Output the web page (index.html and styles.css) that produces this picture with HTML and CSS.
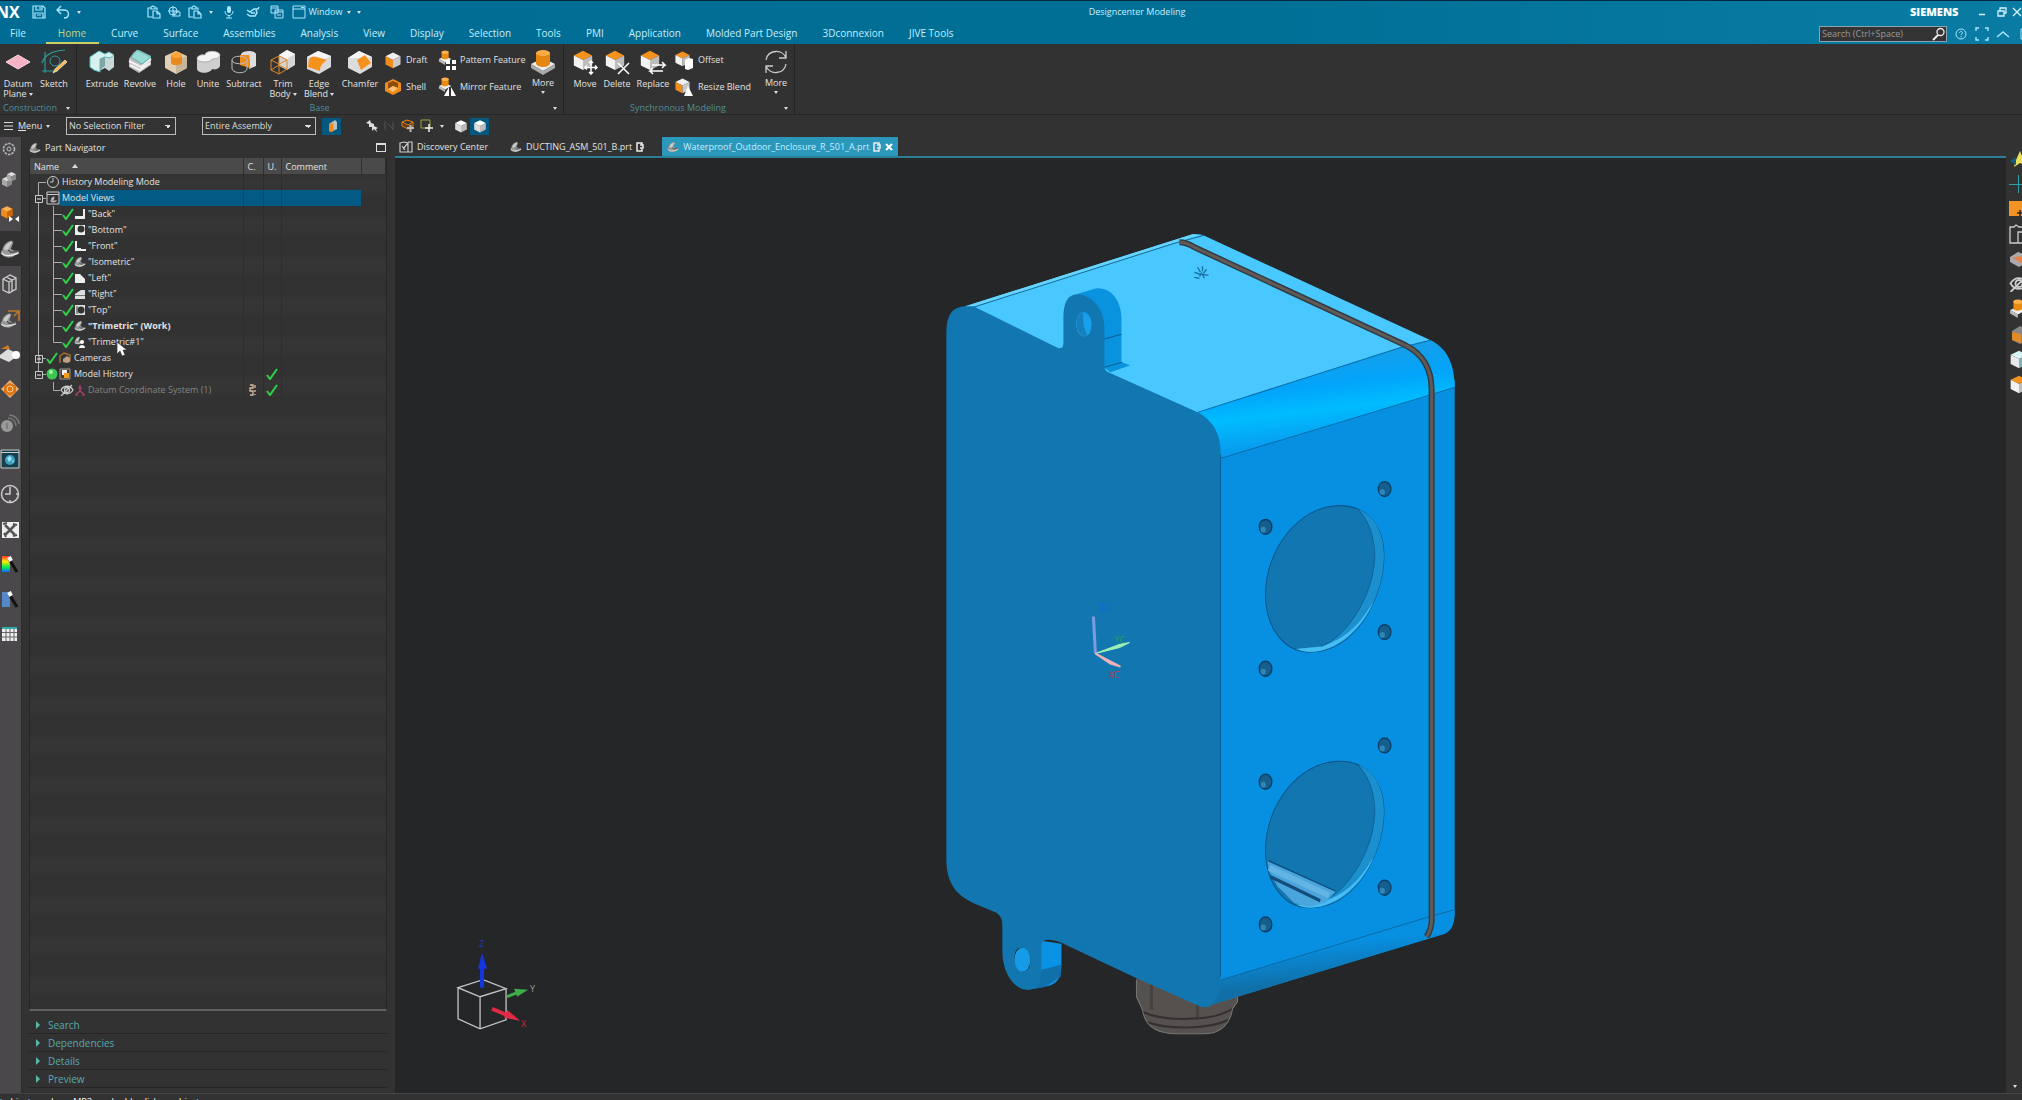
FILE: index.html
```html
<!DOCTYPE html>
<html lang="en">
<head>
<meta charset="utf-8">
<title>Designcenter Modeling</title>
<link rel="stylesheet" href="styles.css">
</head>
<body>
<svg class="sprite" aria-hidden="true">
  <symbol id="cube" viewBox="0 0 24 24"><path class="f-top" d="M12 2l10 5-10 5L2 7z"/><path class="f-left" d="M2 7l10 5v11L2 18z"/><path class="f-right" d="M22 7l-10 5v11l10-5z"/></symbol>
  <symbol id="part" viewBox="0 0 24 24"><path d="M3 13C3 8 9 2 14 2l2 2-3 8 4 2 5 0 1 3-9 5c-5 1-12-2-13-5 0-2 1-3 2-4z" fill="#999"/><path d="M5 13C5 8 10 4 14 3c1 3-3 5-4 10z" fill="#ccc"/><path d="M10 13l3 3 8-1" fill="none" stroke="#444" stroke-width="1.500"/><path d="M2 17c4 4 10 4 20 0" fill="none" stroke="#eee" stroke-width="1.500"/></symbol>
  <symbol id="check" viewBox="0 0 12 12"><path d="M1 7l3 4 7-10" fill="none" stroke="#2fd24c" stroke-width="2"/></symbol>
  <symbol id="paste" viewBox="0 0 14 14"><path d="M5 12H1V3h3m4 0h2v2M4 4V2l2-1 2 1v2zM6 6h4l3 3v4H6zM10 6v3h3" fill="none" stroke="#a9e6ff" stroke-width="1.2"/></symbol>
  <symbol id="out" viewBox="0 0 8 10"><path d="M6 3V1H1v8h5V7M4 3h3v3H4" fill="none" stroke="#eee" stroke-width="1.500"/></symbol>
  <symbol id="feature" viewBox="0 0 18 18"><path d="M1 10l7-3 7 3-7 4z" fill="#eee"/><path d="M1 10l7 4v3l-7-4z" fill="#bbb"/><path d="M4 2v7c1 2 6 2 8 0V2z" fill="#e98a15"/><ellipse cx="8" cy="2.500" rx="4" ry="2" fill="#ffb04a"/></symbol>
  <symbol id="g0first" viewBox="0 0 16 16"><path d="M8.500 16V8.500H16" stroke="#aaa" fill="none"/></symbol>
  <symbol id="gminus" viewBox="0 0 16 16"><path d="M8.500 0v16M8 8.500h8" stroke="#aaa"/><path d="M5.500 5.500h7v7h-7z" fill="#333" stroke="#ccc"/><path d="M7 9h4" stroke="#eee"/></symbol>
  <symbol id="gplus" viewBox="0 0 16 16"><path d="M8.500 0v16M8 8.500h8" stroke="#aaa"/><path d="M5.500 5.500h7v7h-7zM9 6v6" fill="#333" stroke="#ccc"/><path d="M7 9h4" stroke="#eee"/></symbol>
  <symbol id="gend" viewBox="0 0 16 16"><path d="M8.500 0v8.500H16" stroke="#aaa" fill="none"/><path d="M5.500 5.500h7v7h-7z" fill="#333" stroke="#ccc"/><path d="M7 9h4" stroke="#eee"/></symbol>
  <symbol id="g1" viewBox="0 0 32 16"><path d="M8.500 0v16M23.500 0v16M23 8.500h9" stroke="#aaa"/></symbol>
  <symbol id="g1last" viewBox="0 0 32 16"><path d="M8.500 0v16M23.500 0v8.500H32" stroke="#aaa" fill="none"/></symbol>
  <symbol id="gleaf" viewBox="0 0 32 16"><path d="M23.500 0v8.500H32" stroke="#aaa" fill="none"/></symbol>
  <symbol id="eyeoff" viewBox="0 0 14 12"><path d="M1 6c3-5 9-5 12 0-3 5-9 5-12 0zM1 12L12 1" fill="none" stroke="#ccc" stroke-width="1.3"/><circle cx="7" cy="6" r="2.500" fill="none" stroke="#ccc" stroke-width="1.300"/></symbol>
  <linearGradient id="bevel" x1=".4" y1=".1" x2=".6" y2=".9"><stop offset="0" stop-color="#1a9de6"/><stop offset=".35" stop-color="#02a4fa"/><stop offset=".6" stop-color="#00bcff"/><stop offset="1" stop-color="#0a93ea"/></linearGradient>
  <linearGradient id="base" x1=".4" y1=".1" x2=".6" y2=".9"><stop offset=".3" stop-color="#0790e2"/><stop offset=".8" stop-color="#116ea6"/></linearGradient>
  <linearGradient id="hue" x1="0" y1="0" x2="0" y2="1"><stop stop-color="#f33"/><stop offset=".35" stop-color="#fe0"/><stop offset=".7" stop-color="#0e5"/><stop offset="1" stop-color="#16f"/></linearGradient>
</svg>

<header class="titlebar">
  <div class="title-row">
    <div class="quick">
      <span class="brand">NX</span>
      <button class="qb w26" aria-label="Save"><svg width="14" height="14" viewBox="0 0 14 14"><path d="M1 1h10l2 2v10H1zM4 1v4h6V1M8 2v2M3 13V8h8v5M5 10h4" fill="none" stroke="#a9e6ff" stroke-width="1.2"/></svg></button>
      <button class="qb w22" aria-label="Undo"><svg width="14" height="14" viewBox="0 0 14 14"><path d="M5 1L1 5l4 4M1 5h7c6 0 6 8 0 8" fill="none" stroke="#a9e6ff" stroke-width="1.4"/></svg></button>
      <button class="qb caret w10" aria-label="Undo list"></button>
      <button class="qb first-paste" aria-label="Paste"><svg width="14" height="14"><use href="#paste"/></svg></button>
      <button class="qb w20" aria-label="Target"><svg width="14" height="14" viewBox="0 0 14 14"><path d="M6 1v11M1 6h11M7 7h6v4H7z" fill="none" stroke="#a9e6ff"/><circle cx="6" cy="6" r="4" fill="none" stroke="#a9e6ff"/></svg></button>
      <button class="qb w22" aria-label="Paste special"><svg width="14" height="14"><use href="#paste"/></svg></button>
      <button class="qb caret w10" aria-label="Paste list"></button>
      <button class="qb w26" aria-label="Dictate"><svg width="12" height="14" viewBox="0 0 12 14"><rect x="4" y="1" width="4" height="7" rx="2" fill="#a9e6ff"/><path d="M2 6c0 6 8 6 8 0M6 10v3M3 13h6" fill="none" stroke="#a9e6ff"/></svg></button>
      <button class="qb w22" aria-label="Touch"><svg width="14" height="12" viewBox="0 0 14 12"><path d="M1 4l3 2 4-3h4l1-2M1 8l3 2h5l2-3-1-3M5 7h4" fill="none" stroke="#a9e6ff" stroke-width="1.500"/></svg></button>
      <button class="qb w26" aria-label="Cascade"><svg width="14" height="14" viewBox="0 0 14 14"><path d="M1 1h7v7H1zM5 5h8v8H5zM5 7h8M1 3h7M7 10h4" fill="#0b6b93" stroke="#a9e6ff"/></svg></button>
      <button class="qb window-btn"><svg width="14" height="14" viewBox="0 0 14 14"><path d="M1 1h12v12H1zM1 4h12M9 2.500h3" fill="none" stroke="#a9e6ff"/></svg>Window</button>
      <button class="qb caret w10" aria-label="Window list"></button>
      <button class="qb caret w10" aria-label="Customize"></button>
    </div>
    <h1 class="app-title">Designcenter Modeling</h1>
    <div class="win">
      <span class="siemens">SIEMENS</span>
      <button class="qb w20" aria-label="Minimize"><svg width="8" height="8"><path d="M1 6.500h6" stroke="#d5f3ff" stroke-width="1.5"/></svg></button>
      <button class="qb w20" aria-label="Restore"><svg width="10" height="10" viewBox="0 0 10 10"><path d="M1 4h6v5H1zM3 4V1h6v5H7" fill="none" stroke="#d5f3ff" stroke-width="1.3"/></svg></button>
      <button class="qb w16" aria-label="Close"><svg width="10" height="10"><path d="M1 1l8 8M9 1L1 9" stroke="#d5f3ff" stroke-width="1.300"/></svg></button>
    </div>
  </div>
  <div class="tab-row">
    <nav class="menu-tabs">
      <a href="#" class="file">File</a><a href="#" class="on">Home</a><a href="#">Curve</a><a href="#">Surface</a><a href="#">Assemblies</a><a href="#">Analysis</a><a href="#">View</a><a href="#">Display</a><a href="#">Selection</a><a href="#">Tools</a><a href="#">PMI</a><a href="#">Application</a><a href="#">Molded Part Design</a><a href="#">3Dconnexion</a><a href="#">JIVE Tools</a>
    </nav>
    <div class="find">
      <label class="search"><input type="text" aria-label="Search" placeholder="Search (Ctrl+Space)"><svg width="14" height="14" viewBox="0 0 14 14"><circle cx="8.500" cy="5" r="3.500" fill="none" stroke="#eee" stroke-width="1.3"/><path d="M6 8l-5 5" stroke="#eee" stroke-width="2"/></svg></label>
      <button class="qb w20" aria-label="Help"><svg width="12" height="12" viewBox="0 0 12 12"><circle cx="6" cy="6" r="5" fill="none" stroke="#a9e6ff"/><path d="M4.500 5c0-2 3-2 3 0 0 1-1.500 1-1.500 2M6 8v1.200" fill="none" stroke="#a9e6ff"/></svg></button>
      <button class="qb w22" aria-label="Full screen"><svg width="14" height="14" viewBox="0 0 14 14"><path d="M1 4V1h3m6 0h3v3m0 6v3h-3m-6 0H1v-3" fill="none" stroke="#a9e6ff" stroke-width="1.400"/></svg></button>
      <button class="qb w20" aria-label="Collapse ribbon"><svg width="14" height="8"><path d="M1 7l6-5 6 5" fill="none" stroke="#a9e6ff" stroke-width="1.500"/></svg></button>
      <button class="qb w16" aria-label="Options"><svg width="12" height="12"><path d="M6 1h6v10H6z" fill="none" stroke="#a9e6ff"/></svg></button>
    </div>
  </div>
</header>

<section class="ribbon" aria-label="Home">
  <div class="group construction">
    <div class="tools">
      <button class="tool"><svg width="26" height="26" viewBox="0 0 26 26"><path d="M13 6l12 7-12 7-12-7z" fill="#f6b3c6" stroke="#ffd6e2"/></svg><span>Datum<br>Plane<i class="dd"></i></span></button>
      <button class="tool"><svg width="26" height="26" viewBox="0 0 26 26"><path d="M4 24V3M1 22h16M1 14C4 5 12 2 24 1" fill="none" stroke="#2f9c9a" stroke-width="1.200"/><circle cx="14" cy="12" r="5" fill="none" stroke="#2f9c9a"/><path d="M24 11l2 2-10 9-4 2 2-4z" fill="#f5bd4b" stroke="#fff" stroke-width=".6"/></svg><span>Sketch</span></button>
    </div>
    <div class="caption"><span>Construction</span><button class="dd-btn" aria-label="Construction options"></button></div>
  </div>
  <div class="group base">
    <div class="tools">
      <button class="tool"><svg width="26" height="26" viewBox="0 0 26 26"><path d="M1 8l9-6 6 3 4-2 5 3v12l-5 4-4-3-6 3-9-5z" fill="#c9d8d8"/><path d="M1 8l9-6 6 3 4-2 5 3-4 3-5-1-5 2v13l-6-2-4-3z" fill="#d7f1f1" stroke="#5bb9b9"/><path d="M11 10l5-2v9l-5 4z" fill="#7fa5a7"/></svg><span>Extrude</span></button>
      <button class="tool"><svg width="26" height="26" viewBox="0 0 26 26"><path d="M2 10l5-7 5-2 12 6v9L12 24 2 18z" fill="#bcbcbc"/><path d="M4 8l6-7 14 7-9 7z" fill="#9adbd6" stroke="#56b8b0"/><path d="M2 12l12 6 10-8M3 16l10 5 10-7" fill="none" stroke="#f2f2f2" stroke-width="2"/></svg><span>Revolve</span></button>
      <button class="tool"><svg width="26" height="26" viewBox="0 0 26 26"><path d="M2 7l11-5 11 5v12l-11 6-11-6z" fill="#e3cdb4"/><path d="M13 12l11-5v12l-11 6z" fill="#c9b49c"/><path d="M8 6v8c1 3 9 3 11 0V6z" fill="#e98a1f"/><ellipse cx="13.500" cy="6" rx="5.500" ry="3" fill="#ffa63c"/></svg><span>Hole</span></button>
      <button class="tool"><svg width="26" height="26" viewBox="0 0 26 26"><path d="M2 10c0-3 4-5 8-4 0-5 14-5 15 0v11c-1 3-5 4-8 3-2 5-14 5-15 0z" fill="#cfcfcf"/><path d="M2 10c0-3 4-5 8-4 0-5 14-5 15 0 0 3-4 4-8 4-1 4-14 4-15 0z" fill="#f4f4f4" stroke="#999" stroke-width=".7"/></svg><span>Unite</span></button>
      <button class="tool"><svg width="26" height="26" viewBox="0 0 26 26"><path d="M10 5c2-4 14-4 15 0v12l-7 3V10c-3 0-8 0-8-5z" fill="#ddd"/><path d="M9 6h9l1 5v8l-10-3z" fill="#f08c1c"/><path d="M1 11v9c2 5 14 5 15 0v-9M1 11c0-5 14-5 15 0s-15 5-15 0z" fill="none" stroke="#bbb"/></svg><span>Subtract</span></button>
      <button class="tool"><svg width="26" height="26" viewBox="0 0 26 26"><path d="M9 6l8-5 8 4v11l-8 5-8-4z" fill="#d5d5d5"/><path d="M9 6l8-5 8 4-8 5z" fill="#f5f5f5"/><path d="M1 11l8-4 8 4v9l-8 5-8-4zM1 11l8 4 8-4M9 15v10M9 7v9l-8 5M9 16l8 4" fill="none" stroke="#e08a28"/></svg><span>Trim<br>Body<i class="dd"></i></span></button>
      <button class="tool"><svg width="26" height="26" viewBox="0 0 26 26"><path d="M1 8l11-6 13 5v11l-12 7-12-5z" fill="#d9d9d9"/><path d="M1 8l11-6 13 5-6 3z" fill="#f5f5f5"/><path d="M3 10c3-3 5-3 8-2l10 3c-4 3-7 5-7 11L2 18z" fill="#f5921e"/></svg><span>Edge<br>Blend<i class="dd"></i></span></button>
      <button class="tool"><svg width="26" height="26" viewBox="0 0 26 26"><path d="M1 9l11-7 13 6v10l-12 7-12-6z" fill="#dcdcdc"/><path d="M1 9l11-7 13 6-11 1z" fill="#f6f6f6"/><path d="M10 11l8-5 6 8-10 7z" fill="#f5921e"/></svg><span>Chamfer</span></button>
      <div class="stack">
        <button class="mini"><svg class="c-side" width="18" height="18"><use href="#cube"/></svg>Draft</button>
        <button class="mini"><svg width="18" height="18" viewBox="0 0 18 18"><path d="M1 5l8-4 8 4v8l-8 4-8-4z" fill="#ef8c1c"/><path d="M4 5l5-2 5 2v5l-5-2-5 3z" fill="#8f4b08"/><path d="M4 11l5-3 5 2-5 4z" fill="#ffc078"/></svg>Shell</button>
      </div>
      <div class="stack">
        <button class="mini"><svg width="18" height="20" viewBox="0 0 18 20"><use href="#feature" width="16" height="16"/><path d="M8 10h4v4H8zM14 10h4v4h-4zM8 16h4v4H8zM14 16h4v4h-4z" fill="#fff"/></svg>Pattern Feature</button>
        <button class="mini"><svg width="18" height="20" viewBox="0 0 18 20"><use href="#feature" width="16" height="16"/><path d="M11 10v9H6zM13 10v9h5z" fill="#fff"/></svg>Mirror Feature</button>
      </div>
      <button class="tool more"><svg width="26" height="26" viewBox="0 0 26 26"><path d="M1 15l12-6 12 6-12 7z" fill="#eee"/><path d="M1 15l12 7v4L1 19zM25 15l-12 7v4l12-7z" fill="#aaa"/><path d="M6 4v11c2 4 12 4 14 0V4z" fill="#e58512"/><ellipse cx="13" cy="4" rx="7" ry="3" fill="#ffae45"/></svg><span>More<i class="dd below"></i></span></button>
    </div>
    <div class="caption center"><span>Base</span><button class="dd-btn" aria-label="Base options"></button></div>
  </div>
  <div class="group sync">
    <div class="tools">
      <button class="tool"><svg class="c-topo" width="26" height="26" viewBox="0 0 26 26"><use href="#cube" width="22" height="22"/><path d="M19 12v13M12.500 18.500h13M17 14l2-2 2 2M17 23l2 2 2-2M15 16.500l-2 2 2 2M23 16.500l2 2-2 2" fill="none" stroke="#fff" stroke-width="1.500"/></svg><span>Move</span></button>
      <button class="tool"><svg class="c-topo" width="26" height="26" viewBox="0 0 26 26"><use href="#cube" width="22" height="22"/><path d="M14 14l11 11M25 14L14 25" stroke="#fff" stroke-width="1.500"/></svg><span>Delete</span></button>
      <button class="tool"><svg class="c-topo" width="28" height="26" viewBox="0 0 28 26"><use href="#cube" width="22" height="22"/><path d="M13 16h13l-3-3m3 3l-3 3M24 22H11l3-3m-3 3l3 3" fill="none" stroke="#fff" stroke-width="1.500"/></svg><span>Replace</span></button>
      <div class="stack">
        <button class="mini"><svg class="c-topo" width="20" height="20" viewBox="0 0 20 20"><use href="#cube" width="17" height="17"/><path d="M11 10l4-2 4 1v9l-5 2-3-1z" fill="#fff"/></svg>Offset</button>
        <button class="mini"><svg class="c-side" width="20" height="20" viewBox="0 0 20 20"><use href="#cube" width="17" height="17"/><path d="M14 9l5 10h-9z" fill="#fff"/></svg>Resize Blend</button>
      </div>
      <button class="tool more"><svg width="26" height="26" viewBox="0 0 26 26"><path d="M3 11C5 0 20 0 23 9M23 2v7h-7M23 15c-2 11-17 11-20 2M3 24v-7h7" fill="none" stroke="#ccc" stroke-width="1.300"/></svg><span>More<i class="dd below"></i></span></button>
    </div>
    <div class="caption center"><span>Synchronous Modeling</span><button class="dd-btn" aria-label="Synchronous Modeling options"></button></div>
  </div>
</section>

<section class="selbar" aria-label="Selection">
  <button class="menu-btn"><svg width="10" height="10"><path d="M0 1.500h9M0 5h9M0 8.500h9" stroke="#ddd"/></svg><span><u>M</u>enu</span><i class="dd"></i></button>
  <select class="type-filter" aria-label="Type filter"><option>No Selection Filter</option></select>
  <select class="scope" aria-label="Selection scope"><option>Entire Assembly</option></select>
  <button class="sb lit first-lit" aria-label="Face rule"><svg width="12" height="14" viewBox="0 0 12 14"><path d="M3 5l6-4 2 2v7l-6 3z" fill="#b9c4ca"/><path d="M3 5l4-1 1 8-4 1-1-1z" fill="#f08c1c"/></svg></button>
  <button class="sb w40 right" aria-label="Select"><svg width="14" height="14" viewBox="0 0 14 14"><path d="M1 4l4-3 1 3 3 1v2l4 2-2 1 1 3-3-3-2 2V8L4 8V5z" fill="#ddd"/></svg></button>
  <button class="sb dim" aria-label="Deselect"><svg width="12" height="12"><path d="M2 1v9M4 3l6 6M10 2v8" stroke="#555" fill="none"/></svg></button>
  <button class="sb" aria-label="Highlight"><svg width="14" height="14" viewBox="0 0 14 14"><path d="M1 3l5-2 6 2v4l-5 3-6-3zM1 3l6 3 5-3" fill="#5a3a18" stroke="#d88227"/><path d="M6 9h7M9.500 6v7" stroke="#bbb" stroke-width="2"/></svg></button>
  <button class="sb" aria-label="Rectangle select"><svg width="14" height="14" viewBox="0 0 14 14"><path d="M1 1h9v8H1z" fill="none" stroke="#a2a23a"/><path d="M9 5v8M5 9h8" stroke="#eee" stroke-width="1.500"/></svg></button>
  <i class="dd"></i>
  <button class="sb shade" aria-label="Shaded"><svg class="c-white" width="14" height="14"><use href="#cube"/></svg></button>
  <button class="sb lit" aria-label="Shaded with edges"><svg class="c-white" width="14" height="14"><use href="#cube"/></svg></button>
</section>

<main class="work">
  <nav class="rail" aria-label="Resource bar">
    <button class="gear" aria-label="Settings"><svg width="14" height="14" viewBox="0 0 14 14"><circle cx="7" cy="7" r="5.500" fill="none" stroke="#bbb" stroke-width="1.500" stroke-dasharray="2.500 1"/><circle cx="7" cy="7" r="2" fill="none" stroke="#bbb"/></svg></button>
    <button aria-label="Assembly Navigator"><svg class="c-grey" width="20" height="20" viewBox="0 0 20 20"><use href="#cube" x="1" y="6" width="12" height="13"/><use href="#cube" x="6" y="1" width="11" height="13"/></svg></button>
    <button aria-label="Constraint Navigator"><svg class="c-orange" width="20" height="20" viewBox="0 0 20 20"><use href="#cube" width="14" height="16"/><path d="M9 12l4 3-4 3zM19 12l-4 3 4 3z" fill="#fff"/></svg></button>
    <button class="on" aria-label="Part Navigator"><svg width="20" height="20"><use href="#part"/></svg></button>
    <button aria-label="Reuse Library"><svg width="20" height="20" viewBox="0 0 20 20"><path d="M3 5l7-4 6 3v11l-7 4-6-3zM3 5l6 3 7-4M9 8v11M6 3l6 3v11" fill="none" stroke="#ccc" stroke-width="1.300"/></svg></button>
    <button aria-label="View section"><svg width="20" height="20" viewBox="0 0 20 20"><use href="#part" y="3" width="17" height="17"/><path d="M8 2h11v10M19 2l-5 5" fill="none" stroke="#c07a2a" stroke-width="1.500"/></svg></button>
    <button aria-label="Manufacturing"><svg width="20" height="20" viewBox="0 0 20 20"><path d="M1 5h9l-2-4z" fill="#d07a20"/><path d="M0 11l8-6 8 4v4l-7 5-9-4z" fill="#ddd"/><circle cx="16" cy="11" r="4" fill="#fff"/></svg></button>
    <button aria-label="Process"><svg width="20" height="20" viewBox="0 0 20 20"><path d="M10 1l9 9-9 9-9-9z" fill="#efb070"/><path d="M10 4l6 3v6l-6 4-6-4V7z" fill="#dd7412"/><circle cx="10" cy="10" r="3" fill="none" stroke="#ffd09a"/></svg></button>
    <button aria-label="Broadcast"><svg width="20" height="20" viewBox="0 0 20 20"><circle cx="7" cy="12" r="6" fill="#999"/><path d="M7 9v6M8 4c5 0 8 4 8 8M9 1c6 0 10 5 10 9" fill="none" stroke="#777" stroke-width="1.500"/></svg></button>
    <button aria-label="Web browser"><svg width="20" height="20" viewBox="0 0 20 20"><path d="M1 1h18v18H1z" fill="#17404f" stroke="#ccc"/><path d="M1 3.500h18" stroke="#ccc"/><circle cx="10" cy="11" r="5" fill="#3f9fbd"/><path d="M7 9l3-2 2 3-3 3zM12 12l2-1-1 3z" fill="#9fe4f5"/></svg></button>
    <button aria-label="History"><svg width="20" height="20" viewBox="0 0 20 20"><circle cx="10" cy="10" r="8.500" fill="none" stroke="#ccc" stroke-width="1.500"/><path d="M10 3v7H5M10 16v3M16 10h3" fill="none" stroke="#ccc" stroke-width="1.500"/></svg></button>
    <button aria-label="Roles"><svg width="20" height="20" viewBox="0 0 20 20"><path d="M2 3h17v16H2z" fill="#eee"/><path d="M5 6l10 10M15 6L5 16" stroke="#555" stroke-width="2.500"/><path d="M3 5l4-1M13 5l4 1M13 17l4-1M4 14l2 4" stroke="#555" stroke-width="2"/></svg></button>
    <button aria-label="Scene"><svg width="20" height="20" viewBox="0 0 20 20"><path d="M2 2h8v16H2z" fill="url(#hue)"/><path d="M9 5l8 13" stroke="#111" stroke-width="3"/><path d="M9 3l2 4" stroke="#fff" stroke-width="4"/></svg></button>
    <button aria-label="Materials"><svg width="20" height="20" viewBox="0 0 20 20"><path d="M2 3h8v15H2z" fill="#5588c8"/><path d="M9 5l8 13" stroke="#111" stroke-width="3"/><path d="M9 3l2 4" stroke="#fff" stroke-width="4"/></svg></button>
    <button aria-label="Table"><svg width="20" height="20" viewBox="0 0 20 20"><path d="M2 4h15v13H2z" fill="#eee"/><path d="M2 4h15" stroke="#3aa" stroke-width="2"/><path d="M6 5v12M10 5v12M14 5v12M2 8.500h15M2 13h15" stroke="#666"/></svg></button>
  </nav>

  <aside class="navigator">
    <header class="nav-head"><svg width="12" height="12"><use href="#part"/></svg><h2>Part Navigator</h2><button aria-label="Maximize panel"></button></header>
    <div class="tree-wrap">
      <table class="tree">
        <colgroup><col class="c1"><col class="c2"><col class="c3"><col class="c4"><col></colgroup>
        <thead><tr><th>Name<i class="sort"></i></th><th>C.</th><th>U.</th><th>Comment</th><th></th></tr></thead>
        <tbody>
          <tr><td><div><svg width="16" height="16"><use href="#g0first"/></svg><svg width="14" height="14" viewBox="0 0 14 14"><circle cx="7" cy="7" r="5.500" fill="none" stroke="#ccc"/><path d="M7 3v4H4" fill="none" stroke="#ccc"/></svg>History Modeling Mode</div></td><td></td><td></td><td></td><td></td></tr>
          <tr class="sel"><td><div><svg width="16" height="16"><use href="#gminus"/></svg><svg width="14" height="14" viewBox="0 0 14 14"><path d="M1 1h12v12H1zM1 3.500h12" fill="#333" stroke="#ccc"/><use href="#part" x="4" y="5" width="7" height="7"/></svg>Model Views</div></td><td></td><td></td><td></td><td></td></tr>
          <tr><td><div><svg width="32" height="16"><use href="#g1"/></svg><svg class="ck"><use href="#check"/></svg><svg width="12" height="12"><path d="M1 8h8V1h2v10H1z" fill="#eee"/></svg>"Back"</div></td><td></td><td></td><td></td><td></td></tr>
          <tr><td><div><svg width="32" height="16"><use href="#g1"/></svg><svg class="ck"><use href="#check"/></svg><svg width="12" height="12"><path d="M1 1h10v10H1z" fill="#eee"/><circle cx="7" cy="5" r="3.500" fill="#333"/></svg>"Bottom"</div></td><td></td><td></td><td></td><td></td></tr>
          <tr><td><div><svg width="32" height="16"><use href="#g1"/></svg><svg class="ck"><use href="#check"/></svg><svg width="12" height="12"><path d="M1 1h2v7h4v1h5v2H1z" fill="#eee"/></svg>"Front"</div></td><td></td><td></td><td></td><td></td></tr>
          <tr><td><div><svg width="32" height="16"><use href="#g1"/></svg><svg class="ck"><use href="#check"/></svg><svg width="12" height="12"><use href="#part"/></svg>"Isometric"</div></td><td></td><td></td><td></td><td></td></tr>
          <tr><td><div><svg width="32" height="16"><use href="#g1"/></svg><svg class="ck"><use href="#check"/></svg><svg width="12" height="12"><path d="M1 2h5l5 5v4H1z" fill="#eee"/></svg>"Left"</div></td><td></td><td></td><td></td><td></td></tr>
          <tr><td><div><svg width="32" height="16"><use href="#g1"/></svg><svg class="ck"><use href="#check"/></svg><svg width="12" height="12"><path d="M11 2H7L1 6v5h10z" fill="#ddd"/><path d="M1 7.500h10" stroke="#777"/></svg>"Right"</div></td><td></td><td></td><td></td><td></td></tr>
          <tr><td><div><svg width="32" height="16"><use href="#g1"/></svg><svg class="ck"><use href="#check"/></svg><svg width="12" height="12"><path d="M1 1h10v10H1z" fill="#ddd"/><circle cx="7" cy="6" r="3.500" fill="#333"/><path d="M3 2v8" stroke="#444"/></svg>"Top"</div></td><td></td><td></td><td></td><td></td></tr>
          <tr class="work-view"><td><div><svg width="32" height="16"><use href="#g1"/></svg><svg class="ck"><use href="#check"/></svg><svg width="12" height="12"><use href="#part"/></svg>"Trimetric" (Work)</div></td><td></td><td></td><td></td><td></td></tr>
          <tr><td><div><svg width="32" height="16"><use href="#g1last"/></svg><svg class="ck"><use href="#check"/></svg><svg width="12" height="12" viewBox="0 0 12 12"><use href="#part" width="9" height="9"/><circle cx="8" cy="6" r="2" fill="#fff"/><path d="M5 12c0-4 6-4 6 0z" fill="#fff"/></svg>"Trimetric#1"</div></td><td></td><td></td><td></td><td></td></tr>
          <tr><td><div><svg width="16" height="16"><use href="#gplus"/></svg><svg class="ck"><use href="#check"/></svg><svg width="14" height="12" viewBox="0 0 14 12"><path d="M2 11V4l4-3 6 2v6" fill="none" stroke="#a5702f" stroke-width="1.500"/><path d="M5 7l4-3 3 2v4l-3 1-4-1z" fill="#b9a08c"/></svg>Cameras</div></td><td></td><td></td><td></td><td></td></tr>
          <tr><td><div><svg width="16" height="16"><use href="#gend"/></svg><svg width="12" height="12"><circle cx="6" cy="6" r="5.500" fill="#3cc850"/><circle cx="5" cy="4" r="2" fill="#a8f5ae"/></svg><svg width="14" height="12" viewBox="0 0 14 12"><path d="M2 1h10v10H2z" fill="#4a3c28" stroke="#999"/><path d="M4 2h5v5H4z" fill="#eee"/><path d="M6 5h5v5H6z" fill="#f29a20"/></svg>Model History</div></td><td></td><td><svg class="ck"><use href="#check"/></svg></td><td></td><td></td></tr>
          <tr class="hidden-item"><td><div><svg width="30" height="16" viewBox="0 0 30 16"><use href="#gleaf" width="32" height="16"/></svg><svg width="14" height="12"><use href="#eyeoff"/></svg><svg width="12" height="12"><path d="M6 1v6L2 10M6 7l4 3M1 11h3M8 11h3M4 4h4" stroke="#a0406a" fill="none" stroke-width="1.500"/></svg>Datum Coordinate System (1)</div></td><td><svg width="8" height="12"><path d="M1 1h3v3H1v3h3v4H1M6 1v3M6 6v2M6 10v1" fill="none" stroke="#d9b9a8" stroke-width="1.300"/></svg></td><td><svg class="ck"><use href="#check"/></svg></td><td></td><td></td></tr>
        </tbody>
      </table>
      <svg class="pointer" width="12" height="16" viewBox="0 0 12 16"><path d="M1 1v12l3-3 2 5 3-1-2-5h4z" fill="#fff" stroke="#222" stroke-width=".6"/></svg>
    </div>
    <div class="folds"><button>Search</button><button>Dependencies</button><button>Details</button><button>Preview</button></div>
  </aside>

  <section class="stage">
    <nav class="docs">
      <a href="#" class="doc"><svg width="14" height="12" viewBox="0 0 14 12"><path d="M1 2l4-1 4 1v9H1zM9 1h4v10H9M4 8l5-6M3 5l3 4" fill="none" stroke="#ccc" stroke-width="1.200"/></svg>Discovery Center</a>
      <a href="#" class="doc second"><svg width="12" height="12"><use href="#part"/></svg>DUCTING_ASM_501_B.prt<svg width="8" height="10"><use href="#out"/></svg></a>
      <a href="#" class="doc current"><svg width="12" height="12"><use href="#part"/></svg>Waterproof_Outdoor_Enclosure_R_501_A.prt<svg width="8" height="10"><use href="#out"/></svg><svg width="8" height="8"><path d="M1 1l6 6M7 1L1 7" stroke="#fff" stroke-width="2"/></svg></a>
    </nav>
    <svg class="scene" viewBox="396 159 1610 934" role="img" aria-label="Enclosure model">
      <g stroke-linejoin="round">
        <path d="M1137 976v21l6 13c2 14 12 24 34 24h28c16 0 26-10 28-25l5-7v-12z" fill="#55514f"/>
        <path d="M1152 985v25M1198 1000v18" stroke="#47423f" stroke-width="3"/>
        <path d="M1143 1012c20 10 70 10 90-3M1147 1022c20 8 62 8 82-2" fill="none" stroke="#34302f" stroke-width="2"/>
        <path d="M1137 980v17l6 13c2 14 12 24 34 24h28c16 0 26-10 28-25l5-7v-8" fill="none" stroke="#777" stroke-width="1"/>
        <path d="M1198 413L1430 341l25 40v532q0 17-10 21l-240 73z" fill="#0790e2"/>
        <path d="M966 307l227-72q7-1 13 2l225 104-28 7-205 66-60 2-170-60z" fill="#48c8ff"/>
        <path d="M966 307l227-72 5 1-22 8-202 64z" fill="#65d5ff"/>
        <path d="M974 308l201-64 30-8" fill="none" stroke="#146b96"/>
        <path d="M1198 413l204-65 29-7c17 8 24 25 24 47l-26 8-208 63q0-34-23-46z" fill="url(#bevel)"/>
        <path d="M1198 413l204-65 29-7M1221 459l208-63 26-8" fill="none" stroke="#086ca8"/>
        <path d="M1221 980l212-64 22-6q0 18-10 24l-240 73z" fill="url(#base)"/>
        <path d="M1222 980l211-64 22-6" fill="none" stroke="#0a6ba6"/>
        <path d="M1180 243c6 0 10 2 15 5l211 98q26 13 26 45v529q0 9-5 17" fill="none" stroke="#333c42" stroke-width="6"/>
        <path d="M1180 243c6 0 10 2 15 5l211 98q26 13 26 45v529q0 9-5 17" fill="none" stroke="#605b59" stroke-width="3"/>
        <path d="M1077 295l20-6c16-1 25 14 25 30v44l9 3-20 7-8-6z" fill="#0992dd"/>
        <path d="M1104 340l18-5M1105 368l18-5" stroke="#086096"/>
        <path d="M1042 941l20 3v22c0 16-8 19-16 21l-18 3z" fill="#0a92e4"/><path d="M1042 970l20-5-1 12-15 10-10 2z" fill="#116fa9"/>
        <path fill-rule="evenodd" d="M947 333q0-26 19-26h8l83 41q7 3 7-4v-26c0-14 4-23 14-23 16 1 27 16 27 34v38q0 4 4 6l89 40q23 12 23 40v524q0 20-8 27-6 6-14 2l-65-29-72-34q-20-7-20 3v27c0 12-6 17-14 17-14 0-25-18-25-38v-27q0-8-6-12l-19-8c-19-8-31-19-31-46zM1077 325c0 7 4 12 8 12s7-5 7-12-4-12-8-12-7 5-7 12zM1015 959c0 8 5 13 9 13s7-5 7-12-4-12-9-12-7 4-7 11z" fill="#1277b1"/>
        <path d="M1077 325c0-7 3-12 7-12s8 5 8 12-3 12-7 12-8-5-8-12z" fill="#18a0ec"/><path d="M1077 325c0-7 3-12 7-12-1 8 0 16 4 23-6 3-11-4-11-11z" fill="#1580bd"/><ellipse cx="1023" cy="960" rx="8" ry="12" fill="#159be8"/>
        <path d="M1221 455v522" stroke="#0b6299"/>
      </g>
      <g transform="translate(1200 460) scale(.3333 .3703)">
        <g id="port"><path d="M410 125C500 120 553 180 553 260C553 370 470 520 330 520C250 520 198 450 198 365C198 240 300 130 410 125z" fill="#1277b1" stroke="#0a568a" stroke-width="3"/><path d="M475 135C515 170 528 230 525 270C520 370 440 480 365 505L290 512Q310 520 330 520C470 520 553 370 553 260C553 200 525 150 475 135z" fill="#1c8fce"/><path d="M510 400C470 460 420 490 365 505L290 512Q310 520 330 520C420 518 490 450 522 385z" fill="#45bdf5"/><path d="M475 135C515 170 528 230 525 270C520 370 440 480 365 505" fill="none" stroke="#0a568a" stroke-width="2"/></g>
        <use href="#port" y="690"/>
        <path d="M204 1085l205 80-30 30-50 12-45-10-50-45-25-40z" fill="#4aa5dc"/><path d="M212 1126l150 65" stroke="#114d78" stroke-width="9"/><path d="M208 1083l200 82" stroke="#0c4f7e" stroke-width="4"/><path d="M208 1102l180 75" stroke="#62b5e2" stroke-width="16"/>
        <g fill="#155f8e" stroke="#0a4169" stroke-width="4"><ellipse cx="555" cy="80" rx="19" ry="20"/><ellipse cx="198" cy="182" rx="19" ry="20"/><ellipse cx="555" cy="466" rx="19" ry="20"/><ellipse cx="198" cy="565" rx="19" ry="20"/><ellipse cx="555" cy="772" rx="19" ry="20"/><ellipse cx="198" cy="870" rx="19" ry="20"/><ellipse cx="555" cy="1156" rx="19" ry="20"/><ellipse cx="198" cy="1255" rx="19" ry="20"/></g>
        <g fill="#2f86b8"><circle cx="548" cy="88" r="8"/><circle cx="191" cy="190" r="8"/><circle cx="548" cy="474" r="8"/><circle cx="191" cy="573" r="8"/><circle cx="548" cy="780" r="8"/><circle cx="191" cy="878" r="8"/><circle cx="548" cy="1164" r="8"/><circle cx="191" cy="1263" r="8"/></g>
      </g>
      <path d="M1195 273l6 2M1198 268l3 5M1203 267v5M1207 270l-3 4M1209 276l-6-1M1200 277l2-3 3 5M1195 278l5 1" stroke="#176a9c" fill="none" stroke-width="1.300"/>
      <path d="M1096 654l-2-37" stroke="#7f9be0" stroke-width="3"/><path d="M1096 654l24-9 10-2-10 5z" fill="#9df0b8" stroke="#9df0b8"/><path d="M1096 654l25 13-10-3z" fill="#f0b0b8" stroke="#f0b0b8" stroke-width="2"/>
      <g class="axis"><text x="1100" y="612" fill="#1560e8">ZC</text><text x="1115" y="643" fill="#2b9e55">YC</text><text x="1109" y="678" fill="#c0364a">XC</text></g>
      <g transform="translate(2 0)">
        <path d="M457 988l25-8 23 9-26 8zM457 988v31l22 10 26-9v-31M479 997v32" fill="none" stroke="#c4c4c4" stroke-width="1.300"/>
        <path d="M481 988v-22" stroke="#1436e0" stroke-width="4"/><path d="M477 969l4-16 5 16z" fill="#1436e0"/>
        <path d="M506 997l10-4" stroke="#3cae48" stroke-width="3"/><path d="M513 989l14 1-11 7z" fill="#3cae48"/>
        <path d="M491 1009l14 6" stroke="#e02a44" stroke-width="4"/><path d="M506 1010l13 11-16-3z" fill="#e02a44"/>
        <g class="axis"><text x="478" y="947" fill="#2338c0">Z</text><text x="529" y="992" fill="#999">Y</text><text x="520" y="1027" fill="#c02a40">X</text></g>
      </g>
    </svg>
  </section>

  <nav class="dock" aria-label="Quick tools">
    <button aria-label="Favorites"><svg width="20" height="20" viewBox="0 0 20 20"><path d="M11 2l2 5h7l-5 4 2 6-6-3-6 4 2-7z" fill="#e8e05a"/><path d="M1 12l6-4v8z" fill="#155a7c"/></svg></button>
    <button aria-label="Point"><svg width="20" height="20"><path d="M0 10.500h20M9.500 1v18" stroke="#2aa0a8"/></svg></button>
    <button aria-label="Plane"><svg width="20" height="20"><path d="M0 2h20v15H0z" fill="#f29424"/><path d="M8 14h8M11 11v6" stroke="#222" stroke-width="1.500"/></svg></button>
    <button aria-label="Clipboard"><svg width="20" height="20"><path d="M9 19H1V3h4l2-2 3 2h4M9 8h9v11H9z" fill="none" stroke="#ccc" stroke-width="1.300"/></svg></button>
    <button aria-label="Body"><svg class="c-grey" width="20" height="16" viewBox="0 0 20 16"><path d="M1 6l8-5 10 4v6l-9 5-9-5z" fill="#aaa"/><path d="M4 7l8 5 6-3-7-4z" fill="#e8814a"/></svg></button>
    <button aria-label="Hide"><svg width="20" height="17"><use href="#eyeoff"/></svg></button>
    <button aria-label="Edit feature"><svg width="20" height="20"><use href="#feature"/></svg></button>
    <button aria-label="Edge"><svg width="20" height="20" viewBox="0 0 20 20"><path d="M3 7l8-5 8 4v10l-8 4-8-4z" fill="#888"/><path d="M3 8l9 2v9l-9-3z" fill="#e08a28"/></svg></button>
    <button aria-label="Extrude"><svg class="c-ice" width="20" height="20"><use href="#cube"/></svg></button>
    <button aria-label="Move face"><svg class="c-topo" width="20" height="20"><use href="#cube"/></svg></button>
    <button class="overflow" aria-label="More tools"><i class="dd"></i></button>
  </nav>
</main>
<footer class="status"><span>Select objects and use MB3, or double-click an object</span></footer>
</body>
</html>
```
FILE: styles.css
```css
* { box-sizing: border-box; }
body {
  margin: 0;
  height: 100vh;
  overflow: hidden;
  display: flex;
  flex-direction: column;
  background: #323232;
  color: #e2e2e2;
  font: 9px/12px "Open Sans", "Noto Sans", sans-serif;
}
button { border: 0; padding: 0; background: none; color: inherit; font: inherit; }
a { color: inherit; text-decoration: none; }
h1, h2 { margin: 0; font: inherit; }
svg { flex: none; display: block; }
.sprite { position: absolute; width: 0; height: 0; }

.f-top { fill: var(--t); }
.f-left { fill: var(--l); }
.f-right { fill: var(--r); }
.c-orange { --t: #ffb04a; --l: #ef8c1c; --r: #c9690c; }
.c-topo { --t: #f5921e; --l: #f2f2f2; --r: #bdbdbd; }
.c-side { --t: #f0f0f0; --l: #f08c1c; --r: #c9c9c9; }
.c-white { --t: #fff; --l: #ddd; --r: #bbb; }
.c-grey { --t: #ddd; --l: #aaa; --r: #888; }
.c-ice { --t: #d5f4f4; --l: #e8e8e8; --r: #7fb5b8; }

.dd, .caret::before, .dd-btn::before {
  content: "";
  display: inline-block;
  border: 2px solid transparent;
  border-top: 3px solid #ddd;
  border-bottom: 0;
  margin-left: 4px;
  vertical-align: middle;
}
.caret::before, .dd-btn::before { margin: 0; }

/* title bar */
.titlebar {
  flex: none;
  height: 44px;
  border-top: 1px solid #06283f;
  background: linear-gradient(90deg, #006c93, #006f96 60%, #0a7ca4);
  color: #c6efff;
}
.title-row, .quick, .win, .find { display: flex; align-items: center; }
.title-row { height: 22px; }
.quick { width: 364px; }
.brand { width: 30px; margin-left: -4px; color: #fff; font-size: 16px; font-weight: 700; line-height: 22px; }
.qb { flex: none; display: flex; align-items: center; justify-content: center; height: 20px; }
.w10 { width: 10px; }
.w16 { width: 16px; }
.w20 { width: 20px; }
.w22 { width: 22px; }
.w26 { width: 26px; }
.first-paste { width: 20px; margin-left: 60px; }
.window-btn { width: 54px; gap: 3px; }
.app-title { flex: 1; text-align: center; }
.siemens { width: 64px; color: #fff; font-size: 11px; font-weight: 800; }
.win { width: 112px; }
.win > :last-child { flex: 1; }
.tab-row { display: flex; justify-content: space-between; height: 21px; font-size: 10px; }
.menu-tabs { display: flex; margin-left: -2px; }
.menu-tabs a { padding: 4px 13px 2px 12px; line-height: 13px; white-space: nowrap; }
.menu-tabs .file { padding-right: 20px; }
.menu-tabs .on { color: #cfd072; border-bottom: 2px solid #c9cf68; height: 21px; }
.find { width: 203px; overflow: hidden; }
.search {
  display: flex;
  align-items: center;
  width: 128px;
  height: 16px;
  margin-right: 4px;
  border: 1px solid #8ba4ae;
  background: #343434;
}
.search input { flex: 1; min-width: 0; border: 0; padding: 0 2px; background: none; color: #ddd; font: 9px/12px "Open Sans", sans-serif; }
.search input::placeholder { color: #999; opacity: 1; }

/* ribbon */
.ribbon { flex: none; display: flex; height: 71px; border-bottom: 1px solid #262626; }
.group { display: flex; flex-direction: column; border-right: 1px solid #252525; }
.tools { flex: 1; display: grid; padding-top: 5px; }
.construction { width: 77px; }
.construction .tools { grid-template-columns: 36px 36px; }
.base { width: 487px; padding-left: 6px; }
.base .tools { grid-template-columns: 38px 38px 34px 30px 42px 36px 36px 46px 54px 88px 36px; }
.sync { width: 231px; padding-left: 5px; }
.sync .tools { grid-template-columns: 32px 32px 40px 86px 34px; }
.tool { display: flex; flex-direction: column; align-items: center; line-height: 10px; white-space: nowrap; }
.tool span { margin-top: 4px; text-align: center; }
.tool .dd { margin-left: 2px; }
.more span { margin-top: 3px; }
.more .below { display: block; width: 4px; margin: 3px auto 0; }
.stack { display: flex; flex-direction: column; gap: 7px; padding: 1px 0 0 1px; }
.mini { display: flex; align-items: center; gap: 4px; height: 20px; white-space: nowrap; }
.caption { display: flex; justify-content: space-between; padding: 0 6px 0 3px; height: 12px; line-height: 12px; color: #4f8d92; }
.center span { flex: 1; text-align: center; }

/* selection bar */
.selbar { flex: none; display: flex; align-items: center; height: 22px; }
.menu-btn { display: flex; align-items: center; width: 66px; padding-left: 4px; gap: 4px; }
.menu-btn .dd { margin: 0; }
.selbar select {
  height: 18px;
  border: 1px solid #bbb;
  border-radius: 0;
  padding: 0 2px;
  appearance: none;
  color: #ddd;
  font: inherit;
  background-color: #333;
  background-image: linear-gradient(45deg, transparent 50%, #ddd 50%), linear-gradient(-45deg, transparent 50%, #ddd 50%);
  background-size: 3px 3px;
  background-position: right 7px center, right 4px center;
  background-repeat: no-repeat;
}
.type-filter { width: 110px; }
.scope { width: 114px; margin: 0 6px 0 26px; }
.sb { display: flex; align-items: center; justify-content: center; width: 19px; height: 17px; }
.lit { background: #02587f; }
.w40 { width: 38px; }
.right { justify-content: flex-end; }
.shade { margin-left: 7px; }

/* work area */
.work { flex: 1; min-height: 0; display: flex; }
.rail { width: 22px; background: #4a484b; border-right: 1px solid #2c2c2c; }
.rail button { display: flex; align-items: center; width: 20px; height: 35px; }
.rail .gear { height: 24px; padding-left: 2px; }
.rail .on { width: 22px; background: #323232; }
.navigator { flex: none; display: flex; flex-direction: column; width: 368px; padding: 0 3px 0 7px; }
.nav-head { display: flex; align-items: center; gap: 4px; height: 21px; }
.nav-head h2 { flex: 1; }
.nav-head button { width: 10px; height: 9px; margin-right: 1px; border: 1px solid #ddd; border-top-width: 2px; }
.tree-wrap {
  position: relative;
  flex: 1;
  border: 1px solid #262626;
  border-top: 0;
  border-bottom: 2px solid #626262;
  background: repeating-linear-gradient(#323232 0 16px, #353535 24px 32px, #323232 40px);
}
.tree { width: 100%; table-layout: fixed; border-collapse: collapse; }
.c1 { width: 213px; }
.c2 { width: 20px; }
.c3 { width: 18px; }
.c4 { width: 80px; }
.tree th {
  height: 16px;
  padding: 1px 4px 0;
  background: #4a4a4a;
  border-right: 1px solid #2f2f2f;
  font-weight: 400;
  text-align: left;
}
.sort { display: inline-block; margin: 0 0 2px 13px; border: 3px solid transparent; border-top: 0; border-bottom: 4px solid #ddd; }
.tree td { height: 16px; padding: 0; border-right: 1px solid #2d2d2d; }
.tree td:nth-child(n+4) { border-right: 0; }
.tree td div { display: flex; align-items: center; height: 16px; white-space: nowrap; }
.tree td div svg:last-of-type { margin-right: 2px; }
.tree td > svg { margin: 0 auto; }
.ck { width: 12px; height: 12px; }
.sel td { background: #015b85; border-color: #024c70; }
.sel td:first-child { background: linear-gradient(90deg, transparent 30px, #015b85 30px); }
.sel td:last-child { background: none; }
.work-view { font-weight: 700; }
.hidden-item { color: #858585; }
.pointer { position: absolute; left: 86px; top: 183px; }
.folds { height: 82px; padding-top: 5px; }
.folds button {
  display: flex;
  align-items: center;
  gap: 8px;
  width: 100%;
  height: 18px;
  padding-left: 7px;
  border-bottom: 1px solid #252525;
  color: #58a9b0;
  font-size: 10px;
}
.folds button::before { content: ""; border: 4px solid transparent; border-left-color: #58b8a6; border-right: 0; }

.stage { flex: 1; min-width: 0; display: flex; flex-direction: column; margin-left: 5px; }
.docs { display: flex; height: 21px; border-bottom: 2px solid #2b8098; }
.doc { display: flex; align-items: center; gap: 4px; height: 19px; padding-left: 4px; white-space: nowrap; }
.second { margin-left: 18px; }
.current { margin-left: 18px; padding: 0 5px; background: #2b97bb; color: #c6efff; }
.scene { flex: 1; min-height: 0; width: 100%; background: #242628; }
.axis { font: 9px "Open Sans", sans-serif; }
.dock { flex: none; display: flex; flex-direction: column; width: 16px; padding: 9px 0 0 3px; overflow: hidden; }
.dock button { flex: none; display: flex; align-items: center; height: 25px; }
.dock .overflow { margin-top: auto; height: 14px; }

.status { flex: none; height: 7px; overflow: hidden; border-top: 1px solid #444; color: #fff; }
.status span { display: block; margin: 2px 0 0 -22px; white-space: nowrap; }
```
